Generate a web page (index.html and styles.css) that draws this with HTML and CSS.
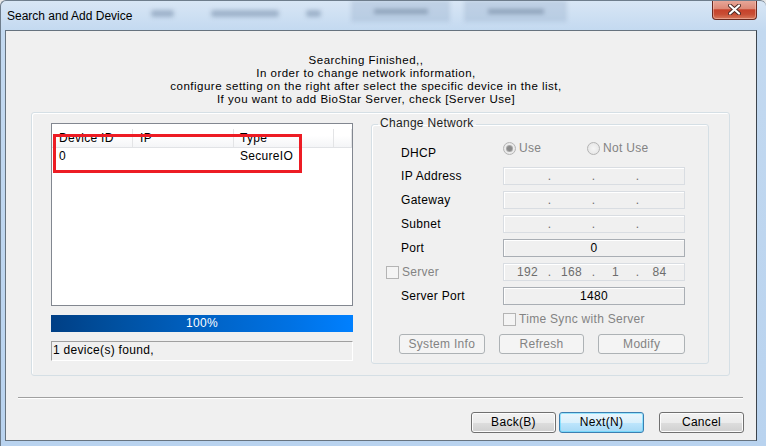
FILE: index.html
```html
<!doctype html>
<html lang="en">
    <head>
        <meta charset="utf-8">
        <title>Search and Add Device</title>
        <link rel="stylesheet" href="styles.css">
    </head>
    <body>
        <div class="Ventana">
            <!-- Title bar, with the blurred desktop behind the glass -->
            <div class="Titulo">
                <span class="TituloTexto">Search and Add Device</span>
                <span class="Fantasma F1"></span>
                <span class="Fantasma F2"></span>
                <span class="Fantasma F3"></span>
                <span class="FantasmaBoton B1"><i></i></span>
                <span class="FantasmaBoton B2"><i></i></span>
                <button class="Cerrar" title="Close">
                    <svg width="13" height="11" viewBox="0 0 13 11">
                        <path d="M2 1.5 L11 9.5 M11 1.5 L2 9.5" stroke="#4a2a26" stroke-width="4" stroke-linecap="round"/>
                        <path d="M2 1.5 L11 9.5 M11 1.5 L2 9.5" stroke="#fff" stroke-width="2.2" stroke-linecap="round"/>
                    </svg>
                </button>
            </div>

            <div class="Cliente">
                <div class="Mensaje">
                    <div>Searching Finished,,</div>
                    <div>In order to change network information,</div>
                    <div>configure setting on the right after select the specific device in the list,</div>
                    <div>If you want to add BioStar Server, check [Server Use]</div>
                </div>

                <div class="Marco">
                    <!-- Device list, progress and status -->
                    <div class="Izquierda">
                        <div class="Lista">
                            <div class="Cabecera">
                                <span class="C1">Device ID</span>
                                <span class="C2">IP</span>
                                <span class="C3">Type</span>
                                <span class="C4"></span>
                            </div>
                            <div class="Fila">
                                <span class="C1">0</span>
                                <span class="C2"></span>
                                <span class="C3">SecureIO</span>
                            </div>
                            <div class="Resalte"></div>
                        </div>
                        <div class="Progreso">100%</div>
                        <div class="Estado">1 device(s) found,</div>
                    </div>

                    <!-- Network options -->
                    <fieldset class="Red">
                        <legend>Change Network</legend>
                        <div class="Opciones">
                            <span class="Etiqueta Baja">DHCP</span>
                            <div class="Radios">
                                <span class="Radio"><i class="Circulo On"></i>Use</span>
                                <span class="Radio"><i class="Circulo"></i>Not Use</span>
                            </div>

                            <span class="Etiqueta">IP Address</span>
                            <div class="IP"><b></b><em>.</em><b></b><em>.</em><b></b><em>.</em><b></b></div>

                            <span class="Etiqueta">Gateway</span>
                            <div class="IP"><b></b><em>.</em><b></b><em>.</em><b></b><em>.</em><b></b></div>

                            <span class="Etiqueta">Subnet</span>
                            <div class="IP"><b></b><em>.</em><b></b><em>.</em><b></b><em>.</em><b></b></div>

                            <span class="Etiqueta">Port</span>
                            <div class="Edit">0</div>

                            <span class="Check Gris"><i class="Caja"></i>Server</span>
                            <div class="IP"><b>192</b><em>.</em><b>168</b><em>.</em><b>1</b><em>.</em><b>84</b></div>

                            <span class="Etiqueta">Server Port</span>
                            <div class="Edit">1480</div>

                            <span></span>
                            <span class="Check Gris Sync"><i class="Caja"></i>Time Sync with Server</span>

                            <div class="Botones">
                                <button class="Boton Off">System Info</button>
                                <button class="Boton Off">Refresh</button>
                                <button class="Boton Off Ancho">Modify</button>
                            </div>
                        </div>
                    </fieldset>
                </div>

                <div class="Separador"></div>

                <div class="Acciones">
                    <button class="Boton Grande">Back(B)</button>
                    <button class="Boton Grande Defecto">Next(N)</button>
                    <button class="Boton Grande Cancelar">Cancel</button>
                </div>
            </div>
        </div>
    </body>
</html>
```

FILE: styles.css
```css
* { box-sizing:border-box; }
body { margin:0; background:#e8e8e8; font-family:"Liberation Sans", Arial, sans-serif; font-size:12px; color:#000; }
button { font-family:inherit; font-size:12px; letter-spacing:inherit; padding:0; }

/* Window frame (aero glass) */
.Ventana {
    width:766px;
    height:446px;
    border-top:1px solid #6e7d8c;
    border-left:1px solid #6e7d8c;
    border-top-left-radius:6px;
    border-top-right-radius:6px;
    background:linear-gradient(to bottom, #d8e6f5 0, #c3d9f0 30px, #b9d3ef 100%);
    overflow:hidden;
}

/* Title bar */
.Titulo {
    height:29px;
    display:flex;
    align-items:center;
    padding-left:6px;
}
.TituloTexto { line-height:12px; color:#000; }
.Fantasma {
    height:7px;
    border-radius:3px;
    background:rgba(70, 95, 130, 0.35);
    filter:blur(2px);
    margin-top:-4px;
}
.F1 { margin-left:19px; width:23px; }
.F2 { margin-left:37px; width:68px; }
.F3 { margin-left:27px; width:15px; }
.FantasmaBoton {
    align-self:flex-start;
    margin-top:-1px;
    height:22px;
    display:flex;
    align-items:center;
    justify-content:center;
    background:rgba(150, 172, 200, 0.35);
    filter:blur(2px);
}
.FantasmaBoton i { width:55%; height:5px; background:rgba(60, 80, 110, 0.35); }
.B1 { margin-left:30px; width:99px; }
.B2 { margin-left:14px; width:103px; }

/* Close button */
.Cerrar {
    align-self:flex-start;
    margin-left:auto;
    margin-right:9px;
    margin-top:-1px;
    width:45px;
    height:20px;
    border:1px solid #6b2a20;
    border-top:none;
    border-radius:0 0 4px 4px;
    background:linear-gradient(to bottom, #e9aa9c 0%, #dd8a78 45%, #c6422b 52%, #c84d34 75%, #d7795c 100%);
    box-shadow:inset 0 0 0 1px rgba(255, 210, 200, 0.45);
    display:flex;
    align-items:center;
    justify-content:center;
}

/* Client area */
.Cliente {
    margin-left:4px;
    width:752px;
    height:411px;
    border:1px solid #66737f;
    border-right-color:#3d454d;
    background:#f0f0f0;
    letter-spacing:0.3px;
}
/* Four tight lines of text at the top */
.Mensaje { padding:23px 30px 0 0; text-align:center; font-size:11.5px; letter-spacing:0.5px; }
.Mensaje div { height:13px; line-height:13px; }

/* Outer group box */
.Marco {
    margin:6px 0 0 25px;
    width:699px;
    height:264px;
    display:flex;
    align-items:flex-start;
    gap:18px;
    padding:4px 20px 0 19px;
    border:1px solid #d5dfe5;
    border-radius:3px;
    box-shadow:inset 1px 1px 0 #fff;
}
.Izquierda { width:302px; margin-top:6px; display:flex; flex-direction:column; }

/* List view */
.Lista {
    position:relative;
    height:183px;
    border:1px solid #828790;
    background:#fff;
}
.Cabecera {
    display:flex;
    height:24px;
    padding-top:5px;
    line-height:18px;
    border-bottom:1px solid #e1e3e6;
    background:linear-gradient(to bottom, #fff 0%, #fff 50%, #f4f5f7 100%);
}
.Cabecera span { border-right:1px solid #e3e4e6; }
.Cabecera .C4 { width:18px; }
.C1, .C2, .C3 { padding-left:7px; }
.C1 { width:81px; }
.C2 { width:101px; }
.C3 { width:100px; padding-left:6px; }
.Fila { display:flex; line-height:16px; }
/* Red mark round the found device */
.Resalte {
    position:absolute;
    left:1px;
    top:10px;
    width:249px;
    height:39px;
    border:3px solid #ed1c24;
}

.Progreso {
    margin-top:9px;
    height:17px;
    line-height:17px;
    text-align:center;
    color:#fff;
    background:linear-gradient(to right, #003f85 0%, #004f9e 20%, #0062c4 50%, #0072e4 80%, #0080ff 100%);
}
.Estado {
    margin-top:9px;
    height:20px;
    padding-left:1px;
    line-height:16px;
    border:1px solid;
    border-color:#a0a0a0 #fff #fff #a0a0a0;
}

/* Change Network group */
.Red {
    margin:0;
    width:338px;
    height:247px;
    padding:0;
    border:1px solid #d5dfe5;
    border-radius:3px;
    box-shadow:inset 1px 1px 0 #fff;
    min-width:0;
}
.Red legend { margin-left:6px; padding:0 2px 3px 2px; line-height:12px; color:#1e1e1e; }
.Opciones {
    display:grid;
    grid-template-columns:117px 182px;
    grid-template-rows:20px;
    grid-auto-rows:18px;
    row-gap:6px;
    padding:9px 0 0 14px;
}
.Etiqueta { padding-left:15px; line-height:18px; }
.Baja { padding-top:3px; }
.Gris { color:#838383; }

.Radios { display:flex; height:18px; line-height:18px; margin-top:-2px; color:#838383; }
.Radio { display:flex; align-items:center; gap:3px; width:84px; }
.Circulo {
    width:13px;
    height:13px;
    border-radius:50%;
    border:1px solid #b4b4b4;
    background:radial-gradient(circle, #f6f6f6 0, #e2e2e2 100%);
    display:flex;
    align-items:center;
    justify-content:center;
}
.Circulo.On::after { content:""; width:5px; height:5px; border-radius:50%; background:#8a8a8a; box-shadow:0 0 0 1px #a8a8a8; }

.Check { display:flex; align-items:center; gap:3px; line-height:18px; }
.Caja { width:13px; height:13px; border:1px solid #b4b4b4; background:#f4f4f4; }
.Sync { margin-top:-2px; }

/* IP address controls */
.IP {
    display:flex;
    padding:0 5px;
    line-height:16px;
    border:1px solid #d9dde2;
    box-shadow:inset 1px 1px 0 #fff;
    color:#6d6d6d;
}
.IP b { width:37px; font-weight:normal; text-align:center; }
.IP em { width:7px; font-style:normal; text-align:center; }
.Edit {
    line-height:16px;
    text-align:center;
    border:1px solid #a9aeb4;
    box-shadow:inset 1px 1px 0 #fff;
}

/* Buttons */
.Botones { grid-column:1 / 3; display:flex; gap:14px; padding-left:13px; margin-top:-1px; }
.Boton {
    width:86px;
    height:20px;
    line-height:18px;
    color:#000;
    border:1px solid #707070;
    border-radius:3px;
    background:linear-gradient(to bottom, #f2f2f2 0%, #ebebeb 50%, #dddddd 51%, #cfcfcf 100%);
    box-shadow:inset 0 0 0 1px #fcfcfc;
}
.Boton.Off { color:#838383; border-color:#adb2b5; background:#f4f4f4; box-shadow:none; }
.Ancho { width:87px; }

.Separador {
    margin:21px 0 0 12px;
    width:725px;
    height:2px;
    border-top:1px solid #a0a0a0;
    border-bottom:1px solid #fff;
}
.Acciones { display:flex; justify-content:flex-end; gap:3px; padding-right:12px; margin-top:13px; }
.Grande { width:85px; height:21px; line-height:19px; }
.Defecto {
    border-color:#3c7fb1;
    background:linear-gradient(to bottom, #eaf6fd 0%, #d9f0fc 50%, #bee6fd 51%, #a7d9f5 100%);
    box-shadow:inset 0 0 0 1px #48d6ff80;
}
.Cancelar { margin-left:12px; }
```
